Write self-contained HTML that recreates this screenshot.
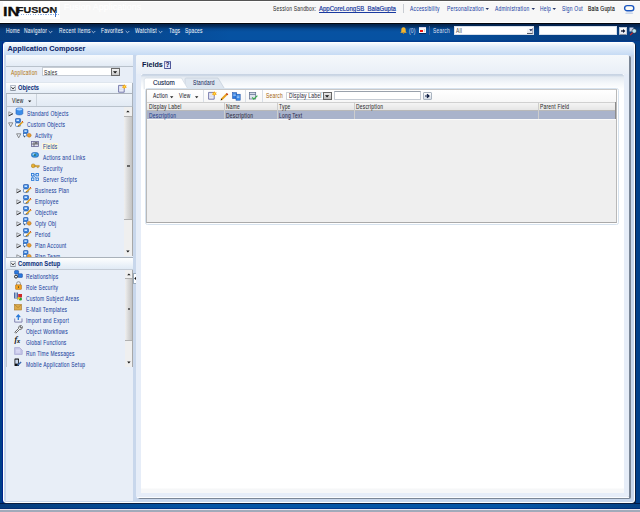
<!DOCTYPE html>
<html><head><meta charset="utf-8">
<style>
*{margin:0;padding:0;box-sizing:border-box}
html,body{width:640px;height:512px;overflow:hidden;background:#003f8a;font-family:"Liberation Sans",sans-serif}
.a{position:absolute}
.t{position:absolute;white-space:nowrap;line-height:1;transform-origin:0 0;-webkit-text-stroke:0.05px currentColor}
</style></head><body>
<div class="a" style="left:0px;top:0px;width:640px;height:1px;background:#555"></div>
<div class="a" style="left:0px;top:1px;width:640px;height:22px;background:#f7f7f7"></div>
<div class="a" style="left:0px;top:1px;width:640px;height:1px;background:#fff"></div>
<div class="a" style="left:0px;top:21.6px;width:640px;height:1px;background:#fff"></div>
<div class="a" style="left:0px;top:22.6px;width:640px;height:1.5px;background:#05080f"></div>
<div class="a" style="left:0px;top:24px;width:640px;height:18px;background:linear-gradient(#03234a,#042c5c 2px,#064a93 5px,#0752a2 8px,#0652a2 16px,#033c8e 17px)"></div>
<div class="a" style="left:0px;top:24px;width:640px;height:17px;background:linear-gradient(90deg,rgba(8,28,70,0.38) 0,rgba(8,28,70,0.25) 110px,rgba(8,28,70,0) 230px,rgba(8,28,70,0) 420px,rgba(8,28,70,0.3) 550px,rgba(8,28,70,0.36) 640px)"></div>
<div class="a" style="left:3px;top:2.3px;width:57px;height:16.7px;background:#fff"></div>
<div class="t" style="left:2.6px;top:5.6px;font-weight:bold;font-size:12.6px;color:#0d0d0d;transform:scaleX(1.3);-webkit-text-stroke:0.3px #0d0d0d">IN</div>
<div class="t" style="left:17.3px;top:6px;font-weight:bold;font-size:8.4px;color:#151515;transform:scaleX(1.27);-webkit-text-stroke:0.2px #151515">FUSION</div>
<div class="a" style="left:18px;top:14px;width:42px;height:1px;background:repeating-linear-gradient(90deg,#8fb0e0 0 1px,transparent 1px 2.5px)"></div>
<div class="a" style="left:55px;top:11px;width:1px;height:6px;background:#3a70c8"></div>
<div class="t" style="left:63.8px;top:2.9px;font-size:9px;color:#fff;-webkit-text-stroke:0.1px #fff">Fusion Applications</div>
<div class="t" style="left:272.8px;top:5.90px;font-size:6.5px;color:#333;transform:scaleX(0.757);letter-spacing:0.3px;">Session Sandbox:</div>
<div class="t" style="left:319px;top:5.90px;font-size:6.5px;color:#1a3aa0;transform:scaleX(0.926);text-decoration:underline;-webkit-text-stroke:0.2px #1a3aa0;">AppCoreLongSB_BalaGupta</div>
<div class="a" style="left:403px;top:4px;width:1px;height:9px;background:#c8ccd2"></div>
<div class="t" style="left:410px;top:5.90px;font-size:6.5px;color:#2545a5;transform:scaleX(0.757);letter-spacing:0.3px;">Accessibility</div>
<div class="t" style="left:447px;top:5.90px;font-size:6.5px;color:#2545a5;transform:scaleX(0.757);letter-spacing:0.3px;">Personalization</div>
<div class="t" style="left:494.5px;top:5.90px;font-size:6.5px;color:#2545a5;transform:scaleX(0.757);letter-spacing:0.3px;">Administration</div>
<div class="t" style="left:539.7px;top:5.90px;font-size:6.5px;color:#2545a5;transform:scaleX(0.757);letter-spacing:0.3px;">Help</div>
<div class="t" style="left:561.6px;top:5.90px;font-size:6.5px;color:#2545a5;transform:scaleX(0.757);letter-spacing:0.3px;">Sign Out</div>
<div class="t" style="left:588px;top:5.90px;font-size:6.5px;color:#000;transform:scaleX(0.757);letter-spacing:0.3px;-webkit-text-stroke:0.1px #000;">Bala Gupta</div>
<svg class="a" style="left:484.5px;top:7px" width="5" height="4"><path d="M0.5 1h3.5l-1.75 2z" fill="#2a3a6a"/></svg>
<svg class="a" style="left:530.5px;top:7px" width="5" height="4"><path d="M0.5 1h3.5l-1.75 2z" fill="#2a3a6a"/></svg>
<svg class="a" style="left:552px;top:7px" width="5" height="4"><path d="M0.5 1h3.5l-1.75 2z" fill="#2a3a6a"/></svg>
<svg class="a" style="left:622px;top:3px" width="14" height="12"><rect x="2.6" y="2.6" width="9.2" height="5.2" rx="2.6" fill="#fdfbf4" stroke="#1a56c0" stroke-width="1.4"/><ellipse cx="7.2" cy="10.2" rx="4" ry="0.9" fill="#c8d6ec"/></svg>
<div class="t" style="left:5.8px;top:28.30px;font-size:6.5px;color:#eef3f9;transform:scaleX(0.757);letter-spacing:0.3px;">Home</div>
<div class="t" style="left:23.7px;top:28.30px;font-size:6.5px;color:#eef3f9;transform:scaleX(0.757);letter-spacing:0.3px;">Navigator</div>
<div class="t" style="left:58.8px;top:28.30px;font-size:6.5px;color:#eef3f9;transform:scaleX(0.757);letter-spacing:0.3px;">Recent Items</div>
<div class="t" style="left:101px;top:28.30px;font-size:6.5px;color:#eef3f9;transform:scaleX(0.757);letter-spacing:0.3px;">Favorites</div>
<div class="t" style="left:135px;top:28.30px;font-size:6.5px;color:#eef3f9;transform:scaleX(0.757);letter-spacing:0.3px;">Watchlist</div>
<div class="t" style="left:168.7px;top:28.30px;font-size:6.5px;color:#eef3f9;transform:scaleX(0.757);letter-spacing:0.3px;">Tags</div>
<div class="t" style="left:185px;top:28.30px;font-size:6.5px;color:#eef3f9;transform:scaleX(0.757);letter-spacing:0.3px;">Spaces</div>
<svg class="a" style="left:48px;top:30px" width="5" height="4"><path d="M0.7 1l1.8 1.8l1.8-1.8" fill="none" stroke="#c8d6ea" stroke-width="0.8"/></svg>
<svg class="a" style="left:90.5px;top:30px" width="5" height="4"><path d="M0.7 1l1.8 1.8l1.8-1.8" fill="none" stroke="#c8d6ea" stroke-width="0.8"/></svg>
<svg class="a" style="left:124.5px;top:30px" width="5" height="4"><path d="M0.7 1l1.8 1.8l1.8-1.8" fill="none" stroke="#c8d6ea" stroke-width="0.8"/></svg>
<svg class="a" style="left:157.5px;top:30px" width="5" height="4"><path d="M0.7 1l1.8 1.8l1.8-1.8" fill="none" stroke="#c8d6ea" stroke-width="0.8"/></svg>
<svg class="a" style="left:400px;top:27px" width="7" height="7"><path d="M3.5 0.3c-1.5 0-2.2 1.2-2.2 2.6v1.5l-1 1.3h6.4l-1-1.3v-1.5c0-1.4-0.7-2.6-2.2-2.6z" fill="#f2b530"/><circle cx="3.5" cy="6.3" r="0.7" fill="#c88010"/></svg>
<div class="t" style="left:409px;top:27.90px;font-size:6.5px;color:#c4d2e8;transform:scaleX(0.757);letter-spacing:0.3px;">(0)</div>
<div class="a" style="left:419px;top:27px;width:7px;height:6px;background:linear-gradient(#d8d0e8 0 1.2px,#f6f6f8 1.2px);box-shadow:0 0.6px 0 #001a40"></div>
<div class="a" style="left:420px;top:29.5px;width:3.2px;height:2px;background:#f01010"></div>
<div class="a" style="left:423.5px;top:28.5px;width:1.8px;height:3.5px;background:#d8d0c0"></div>
<div class="a" style="left:429px;top:26px;width:1px;height:9px;background:#3f609a"></div>
<div class="t" style="left:433px;top:27.90px;font-size:6.5px;color:#d4deec;transform:scaleX(0.757);letter-spacing:0.3px;">Search</div>
<div class="a" style="left:453.5px;top:26px;width:80.5px;height:9px;background:#fff;border:0.5px solid #d8e0ea"></div>
<div class="t" style="left:456px;top:28.40px;font-size:6.5px;color:#555;transform:scaleX(0.757);letter-spacing:0.3px;">All</div>
<div class="a" style="left:527px;top:27.6px;width:6.2px;height:6.2px;background:linear-gradient(#fdfdfd,#e4e8f0);border-bottom:1px solid #555a66;border-right:0.6px solid #aab"></div>
<svg class="a" style="left:528.6px;top:29.3px" width="4" height="3"><path d="M0.2 0.3h3.4L1.9 2.3z" fill="#0a1a50"/></svg>
<div class="a" style="left:538.5px;top:26px;width:78.5px;height:9px;background:#fff;border:0.5px solid #d8e0ea"></div>
<div class="a" style="left:618.75px;top:27px;width:8px;height:8px;background:linear-gradient(#fff,#e6eaf0);border:0.6px solid #c4ccd8;border-bottom-color:#8a94a4"></div>
<svg class="a" style="left:619.5px;top:28px" width="7" height="6"><path d="M1 3h2.6" stroke="#0a1430" stroke-width="1.3"/><path d="M3 0.9l2.4 2.1l-2.4 2.1z" fill="#0a1430"/></svg>
<svg class="a" style="left:628.5px;top:26.5px" width="9" height="9"><rect x="0.5" y="0.5" width="4" height="4" fill="#c8d0e8"/><circle cx="5.2" cy="4" r="2.3" fill="#b8e6f2" stroke="#223" stroke-width="0.6"/><path d="M3.6 5.6l-2.5 2.6" stroke="#d02020" stroke-width="1.2"/></svg>
<div class="a" style="left:0px;top:42px;width:640px;height:466px;background:#003f8a"></div>
<div class="a" style="left:2px;top:42px;width:1px;height:461px;background:#00248a"></div>
<div class="a" style="left:0px;top:503px;width:640px;height:6px;background:linear-gradient(#001a48 0,#001a48 1px,#0454a4 1.5px,#0456a6 4.5px,#003a90 5px)"></div>
<div class="a" style="left:0px;top:504px;width:640px;height:4.5px;background:linear-gradient(90deg,rgba(8,28,70,0.45) 0,rgba(8,28,70,0.3) 60px,rgba(8,28,70,0) 200px,rgba(8,28,70,0) 520px,rgba(8,28,70,0.35) 640px)"></div>
<div class="a" style="left:0px;top:509px;width:640px;height:1px;background:#ece8f0"></div>
<div class="a" style="left:0px;top:510px;width:640px;height:2px;background:#a2aaba"></div>
<div class="a" style="left:3px;top:42px;width:632px;height:461px;background:#c8d7ec;border-radius:3px;border:1px solid #fff;border-bottom:1.5px solid #fff;box-shadow:1px 1px 0 #0a1e40"></div>
<div class="a" style="left:4px;top:43px;width:630px;height:12px;background:linear-gradient(#f8fbfe,#e2edfa 30%,#c6dbf4);border-radius:2px 2px 0 0"></div>
<div class="t" style="left:7.5px;top:44.5px;font-weight:bold;font-size:7.3px;color:#0a2468">Application Composer</div>
<div class="a" style="left:6px;top:55px;width:127px;height:446px;background:#e8eef7"></div>
<div class="a" style="left:6px;top:55px;width:127px;height:11px;background:linear-gradient(#f7fafd,#e3ebf5)"></div>
<div class="a" style="left:6px;top:66px;width:127px;height:1px;background:#b9c2cc"></div>
<div class="t" style="left:11px;top:69.90px;font-size:6.5px;color:#b47814;transform:scaleX(0.757);letter-spacing:0.3px;">Application</div>
<div class="a" style="left:41.5px;top:67.4px;width:78.5px;height:9px;background:#fff;border:1px solid #c6ccd4"></div>
<div class="t" style="left:43.6px;top:69.90px;font-size:6.5px;color:#333;transform:scaleX(0.757);letter-spacing:0.3px;">Sales</div>
<div class="a" style="left:111px;top:68px;width:8.5px;height:8px;background:linear-gradient(#f2f2f2,#c8c8c8);border:1px solid #6a6a6a"></div>
<svg class="a" style="left:113.2px;top:71px" width="5" height="3"><path d="M0 0.3h4.2L2.1 2.6z" fill="#111"/></svg>
<div class="a" style="left:6px;top:82.3px;width:127px;height:11.9px;background:linear-gradient(#fdfefe,#e4edf7);border-top:1px solid #dfe6ee;border-bottom:1px solid #aab2bb"></div>
<div class="a" style="left:9.5px;top:84.8px;width:6px;height:6px;background:linear-gradient(#fbfcfd,#dfe4ea);border:0.7px solid #b4bcc8;border-bottom-color:#8f98a4;border-radius:1px"></div>
<svg class="a" style="left:9.5px;top:84.8px" width="6" height="6"><path d="M1.3 2.2l1.7 1.6l1.7-1.6" fill="none" stroke="#111" stroke-width="0.9"/></svg>
<div class="t" style="left:17.6px;top:84.90px;font-size:6.5px;color:#0c2e7a;font-weight:bold;transform:scaleX(0.88);">Objects</div>
<svg class="a" style="left:118px;top:83.5px" width="9" height="9"><path d="M0.6 1.4h5.6v6.8h-5.6z" fill="#eceef8" stroke="#5a5e9a" stroke-width="0.8"/><path d="M1.4 2.4h2.6M1.4 4h3.4M1.4 5.6h3.4" stroke="#c8cce0" stroke-width="0.5"/><path d="M6.4 0.2l0.8 1.4l1.6-0.2l-0.9 1.3l0.9 1.3l-1.6-0.2l-0.8 1.4l-0.8-1.4l-1.6 0.2l0.9-1.3l-0.9-1.3l1.6 0.2z" fill="#f4a010"/><circle cx="6.4" cy="2.7" r="0.9" fill="#ffe040"/></svg>
<div class="a" style="left:6px;top:93.5px;width:127px;height:13px;background:linear-gradient(#eef3f9,#e2eaf4);border-left:1px solid #b8c2ce;border-bottom:1px solid #b9c2cc"></div>
<div class="t" style="left:12.2px;top:97.90px;font-size:6.5px;color:#222;transform:scaleX(0.757);letter-spacing:0.3px;">View</div>
<svg class="a" style="left:28px;top:100px" width="4" height="3"><path d="M0 0.4h3.4L1.7 2.2z" fill="#222"/></svg>
<div class="a" style="left:36px;top:94px;width:1px;height:12px;background:#cbd3dc"></div>
<div class="a" style="left:132.3px;top:82.5px;width:1px;height:24px;background:#aab2bc"></div>
<div class="a" style="left:6px;top:106.5px;width:1px;height:150.5px;background:#b8c2ce"></div>
<div class="a" style="left:41.5px;top:143.2px;width:16px;height:6.5px;background:#fcf6d8"></div>
<svg class="a" style="left:8px;top:111.2px" width="6" height="6"><path d="M0.8 0.8L4.8 2.8L0.8 4.8z" fill="none" stroke="#777" stroke-width="0.7"/><path d="M0.8 4.8L4.8 2.8" stroke="#222" stroke-width="0.8"/></svg>
<svg class="a" style="left:15px;top:107.2px" width="9" height="9"><path d="M1 2.2C1 0.6 7.8 0.6 7.8 2.2V6.6C7.8 8.3 1 8.3 1 6.6z" fill="#3b8de8" stroke="#1b5ec0" stroke-width="0.6"/><ellipse cx="4.4" cy="2.3" rx="3" ry="1.1" fill="#a8d2ff"/></svg>
<div class="t" style="left:26.7px;top:110.90px;font-size:6.5px;color:#183e9c;transform:scaleX(0.757);letter-spacing:0.3px;">Standard Objects</div>
<svg class="a" style="left:8px;top:122.2px" width="6" height="6"><path d="M0.6 0.8H4.8L2.7 4.8z" fill="none" stroke="#666" stroke-width="0.7"/></svg>
<svg class="a" style="left:15px;top:118.2px" width="9" height="9"><rect x="0.5" y="0.5" width="5" height="4" rx="0.8" fill="#3a86e0" stroke="#1a4aa0" stroke-width="0.6"/><rect x="1.5" y="1.5" width="2.5" height="1.5" fill="#cfe6ff"/><rect x="0.5" y="5" width="5" height="3.3" rx="0.6" fill="#fff" stroke="#1a5ab0" stroke-width="0.6"/><path d="M3.2 8.3L7.8 3.7" stroke="#e0a020" stroke-width="1.6"/><path d="M3 8.5l0.8-1" stroke="#222" stroke-width="0.8"/><path d="M7.2 3.2l1 1" stroke="#d03010" stroke-width="1"/></svg>
<div class="t" style="left:26.7px;top:121.90px;font-size:6.5px;color:#183e9c;transform:scaleX(0.757);letter-spacing:0.3px;">Custom Objects</div>
<svg class="a" style="left:16.4px;top:133.2px" width="6" height="6"><path d="M0.6 0.8H4.8L2.7 4.8z" fill="none" stroke="#666" stroke-width="0.7"/></svg>
<svg class="a" style="left:23px;top:129.2px" width="9" height="9"><rect x="0.5" y="0.5" width="4.5" height="3.8" rx="0.8" fill="#3a86e0" stroke="#1a4aa0" stroke-width="0.6"/><rect x="1.4" y="1.4" width="2.4" height="1.5" fill="#cfe6ff"/><rect x="0.5" y="4.6" width="3" height="2.4" fill="#fff" stroke="#1a5ab0" stroke-width="0.6"/><path d="M1.5 7v1.3" stroke="#222" stroke-width="0.7"/><circle cx="6.2" cy="6.3" r="1.9" fill="#e8a030" stroke="#b06010" stroke-width="0.5"/></svg>
<div class="t" style="left:34.5px;top:132.90px;font-size:6.5px;color:#183e9c;transform:scaleX(0.757);letter-spacing:0.3px;">Activity</div>
<div class="t" style="left:42.6px;top:143.90px;font-size:6.5px;color:#183e9c;transform:scaleX(0.757);letter-spacing:0.3px;">Fields</div>
<div class="t" style="left:42.6px;top:154.90px;font-size:6.5px;color:#183e9c;transform:scaleX(0.757);letter-spacing:0.3px;">Actions and Links</div>
<div class="t" style="left:42.6px;top:165.90px;font-size:6.5px;color:#183e9c;transform:scaleX(0.757);letter-spacing:0.3px;">Security</div>
<div class="t" style="left:42.6px;top:176.90px;font-size:6.5px;color:#183e9c;transform:scaleX(0.757);letter-spacing:0.3px;">Server Scripts</div>
<svg class="a" style="left:16.4px;top:188.2px" width="6" height="6"><path d="M0.8 0.8L4.8 2.8L0.8 4.8z" fill="none" stroke="#777" stroke-width="0.7"/><path d="M0.8 4.8L4.8 2.8" stroke="#222" stroke-width="0.8"/></svg>
<svg class="a" style="left:23px;top:184.2px" width="9" height="9"><rect x="0.5" y="0.5" width="5" height="4" rx="0.8" fill="#3a86e0" stroke="#1a4aa0" stroke-width="0.6"/><rect x="1.5" y="1.5" width="2.5" height="1.5" fill="#cfe6ff"/><rect x="0.5" y="5" width="5" height="3.3" rx="0.6" fill="#fff" stroke="#1a5ab0" stroke-width="0.6"/><path d="M3.2 8.3L7.8 3.7" stroke="#e0a020" stroke-width="1.6"/><path d="M3 8.5l0.8-1" stroke="#222" stroke-width="0.8"/><path d="M7.2 3.2l1 1" stroke="#d03010" stroke-width="1"/></svg>
<div class="t" style="left:34.5px;top:187.90px;font-size:6.5px;color:#183e9c;transform:scaleX(0.757);letter-spacing:0.3px;">Business Plan</div>
<svg class="a" style="left:16.4px;top:199.2px" width="6" height="6"><path d="M0.8 0.8L4.8 2.8L0.8 4.8z" fill="none" stroke="#777" stroke-width="0.7"/><path d="M0.8 4.8L4.8 2.8" stroke="#222" stroke-width="0.8"/></svg>
<svg class="a" style="left:23px;top:195.2px" width="9" height="9"><rect x="0.5" y="0.5" width="5" height="4" rx="0.8" fill="#3a86e0" stroke="#1a4aa0" stroke-width="0.6"/><rect x="1.5" y="1.5" width="2.5" height="1.5" fill="#cfe6ff"/><rect x="0.5" y="5" width="5" height="3.3" rx="0.6" fill="#fff" stroke="#1a5ab0" stroke-width="0.6"/><path d="M3.2 8.3L7.8 3.7" stroke="#e0a020" stroke-width="1.6"/><path d="M3 8.5l0.8-1" stroke="#222" stroke-width="0.8"/><path d="M7.2 3.2l1 1" stroke="#d03010" stroke-width="1"/></svg>
<div class="t" style="left:34.5px;top:198.90px;font-size:6.5px;color:#183e9c;transform:scaleX(0.757);letter-spacing:0.3px;">Employee</div>
<svg class="a" style="left:16.4px;top:210.2px" width="6" height="6"><path d="M0.8 0.8L4.8 2.8L0.8 4.8z" fill="none" stroke="#777" stroke-width="0.7"/><path d="M0.8 4.8L4.8 2.8" stroke="#222" stroke-width="0.8"/></svg>
<svg class="a" style="left:23px;top:206.2px" width="9" height="9"><rect x="0.5" y="0.5" width="5" height="4" rx="0.8" fill="#3a86e0" stroke="#1a4aa0" stroke-width="0.6"/><rect x="1.5" y="1.5" width="2.5" height="1.5" fill="#cfe6ff"/><rect x="0.5" y="5" width="5" height="3.3" rx="0.6" fill="#fff" stroke="#1a5ab0" stroke-width="0.6"/><path d="M3.2 8.3L7.8 3.7" stroke="#e0a020" stroke-width="1.6"/><path d="M3 8.5l0.8-1" stroke="#222" stroke-width="0.8"/><path d="M7.2 3.2l1 1" stroke="#d03010" stroke-width="1"/></svg>
<div class="t" style="left:34.5px;top:209.90px;font-size:6.5px;color:#183e9c;transform:scaleX(0.757);letter-spacing:0.3px;">Objective</div>
<svg class="a" style="left:16.4px;top:221.2px" width="6" height="6"><path d="M0.8 0.8L4.8 2.8L0.8 4.8z" fill="none" stroke="#777" stroke-width="0.7"/><path d="M0.8 4.8L4.8 2.8" stroke="#222" stroke-width="0.8"/></svg>
<svg class="a" style="left:23px;top:217.2px" width="9" height="9"><rect x="0.5" y="0.5" width="4.5" height="3.8" rx="0.8" fill="#3a86e0" stroke="#1a4aa0" stroke-width="0.6"/><rect x="1.4" y="1.4" width="2.4" height="1.5" fill="#cfe6ff"/><rect x="0.5" y="4.6" width="3" height="2.4" fill="#fff" stroke="#1a5ab0" stroke-width="0.6"/><path d="M1.5 7v1.3" stroke="#222" stroke-width="0.7"/><circle cx="6.2" cy="6.3" r="1.9" fill="#e8a030" stroke="#b06010" stroke-width="0.5"/></svg>
<div class="t" style="left:34.5px;top:220.90px;font-size:6.5px;color:#183e9c;transform:scaleX(0.757);letter-spacing:0.3px;">Opty Obj</div>
<svg class="a" style="left:16.4px;top:232.2px" width="6" height="6"><path d="M0.8 0.8L4.8 2.8L0.8 4.8z" fill="none" stroke="#777" stroke-width="0.7"/><path d="M0.8 4.8L4.8 2.8" stroke="#222" stroke-width="0.8"/></svg>
<svg class="a" style="left:23px;top:228.2px" width="9" height="9"><rect x="0.5" y="0.5" width="5" height="4" rx="0.8" fill="#3a86e0" stroke="#1a4aa0" stroke-width="0.6"/><rect x="1.5" y="1.5" width="2.5" height="1.5" fill="#cfe6ff"/><rect x="0.5" y="5" width="5" height="3.3" rx="0.6" fill="#fff" stroke="#1a5ab0" stroke-width="0.6"/><path d="M3.2 8.3L7.8 3.7" stroke="#e0a020" stroke-width="1.6"/><path d="M3 8.5l0.8-1" stroke="#222" stroke-width="0.8"/><path d="M7.2 3.2l1 1" stroke="#d03010" stroke-width="1"/></svg>
<div class="t" style="left:34.5px;top:231.90px;font-size:6.5px;color:#183e9c;transform:scaleX(0.757);letter-spacing:0.3px;">Period</div>
<svg class="a" style="left:16.4px;top:243.2px" width="6" height="6"><path d="M0.8 0.8L4.8 2.8L0.8 4.8z" fill="none" stroke="#777" stroke-width="0.7"/><path d="M0.8 4.8L4.8 2.8" stroke="#222" stroke-width="0.8"/></svg>
<svg class="a" style="left:23px;top:239.2px" width="9" height="9"><rect x="0.5" y="0.5" width="4.5" height="3.8" rx="0.8" fill="#3a86e0" stroke="#1a4aa0" stroke-width="0.6"/><rect x="1.4" y="1.4" width="2.4" height="1.5" fill="#cfe6ff"/><rect x="0.5" y="4.6" width="3" height="2.4" fill="#fff" stroke="#1a5ab0" stroke-width="0.6"/><path d="M1.5 7v1.3" stroke="#222" stroke-width="0.7"/><circle cx="6.2" cy="6.3" r="1.9" fill="#e8a030" stroke="#b06010" stroke-width="0.5"/></svg>
<div class="t" style="left:34.5px;top:242.90px;font-size:6.5px;color:#183e9c;transform:scaleX(0.757);letter-spacing:0.3px;">Plan Account</div>
<svg class="a" style="left:16.4px;top:254.2px" width="6" height="6"><path d="M0.8 0.8L4.8 2.8L0.8 4.8z" fill="none" stroke="#777" stroke-width="0.7"/><path d="M0.8 4.8L4.8 2.8" stroke="#222" stroke-width="0.8"/></svg>
<svg class="a" style="left:23px;top:250.2px" width="9" height="9"><rect x="0.5" y="0.5" width="4.5" height="3.8" rx="0.8" fill="#3a86e0" stroke="#1a4aa0" stroke-width="0.6"/><rect x="1.4" y="1.4" width="2.4" height="1.5" fill="#cfe6ff"/><rect x="0.5" y="4.6" width="3" height="2.4" fill="#fff" stroke="#1a5ab0" stroke-width="0.6"/><path d="M1.5 7v1.3" stroke="#222" stroke-width="0.7"/><circle cx="6.2" cy="6.3" r="1.9" fill="#e8a030" stroke="#b06010" stroke-width="0.5"/></svg>
<div class="t" style="left:34.5px;top:253.90px;font-size:6.5px;color:#183e9c;transform:scaleX(0.757);letter-spacing:0.3px;">Plan Team</div>
<svg class="a" style="left:31px;top:141px" width="8" height="6"><rect x="0.5" y="0.5" width="7" height="5" fill="#dcdcf0" stroke="#6a6a9a" stroke-width="0.8"/><path d="M0.5 3h7M3 0.5v5" stroke="#555" stroke-width="0.8"/><rect x="4" y="1.3" width="2.6" height="1.2" fill="#444"/></svg>
<svg class="a" style="left:31px;top:152px" width="8" height="6"><rect x="0.4" y="0.6" width="7.2" height="4.6" rx="2.2" fill="#3a9ae0" stroke="#1a5ab0" stroke-width="0.6"/><rect x="1.6" y="1.6" width="2.2" height="1" fill="#d8f0ff"/><rect x="3.3" y="2.2" width="1.2" height="1.6" fill="#2a5a20"/></svg>
<svg class="a" style="left:31px;top:163px" width="9" height="6"><circle cx="2.2" cy="2.8" r="1.9" fill="#e8b030" stroke="#a07010" stroke-width="0.5"/><path d="M3.8 2.4h4.5v1.3h-1v1h-1v-1h-2.5z" fill="#e8b030" stroke="#a07010" stroke-width="0.4"/></svg>
<svg class="a" style="left:31px;top:173px" width="8" height="8"><rect x="0.5" y="0.5" width="2.4" height="2.4" fill="none" stroke="#2a7ad8" stroke-width="0.9"/><rect x="5" y="0.5" width="2.4" height="2.4" fill="none" stroke="#2a7ad8" stroke-width="0.9"/><rect x="0.5" y="5" width="2.4" height="2.4" fill="none" stroke="#2a7ad8" stroke-width="0.9"/><rect x="5" y="5" width="2.4" height="2.4" fill="none" stroke="#2a7ad8" stroke-width="0.9"/><path d="M2.9 1.7h2.1M1.7 2.9v2.1M2.9 2.9l2.1 2.1" stroke="#2a7ad8" stroke-width="0.7"/></svg>
<div class="a" style="left:6px;top:256.5px;width:127px;height:1px;background:#a9b1ba"></div>
<div class="a" style="left:6px;top:257.5px;width:127px;height:12px;background:linear-gradient(#fdfefe,#e0eaf5);border-bottom:1px solid #c4ccd6"></div>
<div class="a" style="left:9.5px;top:261px;width:6px;height:6px;background:linear-gradient(#fbfcfd,#dfe4ea);border:0.7px solid #b4bcc8;border-bottom-color:#8f98a4;border-radius:1px"></div>
<svg class="a" style="left:9.5px;top:261px" width="6" height="6"><path d="M1.3 2.2l1.7 1.6l1.7-1.6" fill="none" stroke="#111" stroke-width="0.9"/></svg>
<div class="t" style="left:17.7px;top:260.90px;font-size:6.5px;color:#0c2e7a;font-weight:bold;transform:scaleX(0.88);">Common Setup</div>
<div class="a" style="left:6px;top:270px;width:1px;height:97px;background:#c0c8d4"></div>
<div class="t" style="left:25.8px;top:273.90px;font-size:6.5px;color:#183e9c;transform:scaleX(0.757);letter-spacing:0.3px;">Relationships</div>
<div class="t" style="left:25.8px;top:284.90px;font-size:6.5px;color:#183e9c;transform:scaleX(0.757);letter-spacing:0.3px;">Role Security</div>
<div class="t" style="left:25.8px;top:295.90px;font-size:6.5px;color:#183e9c;transform:scaleX(0.757);letter-spacing:0.3px;">Custom Subject Areas</div>
<div class="t" style="left:25.8px;top:306.90px;font-size:6.5px;color:#183e9c;transform:scaleX(0.757);letter-spacing:0.3px;">E-Mail Templates</div>
<div class="t" style="left:25.8px;top:317.90px;font-size:6.5px;color:#183e9c;transform:scaleX(0.757);letter-spacing:0.3px;">Import and Export</div>
<div class="t" style="left:25.8px;top:328.90px;font-size:6.5px;color:#183e9c;transform:scaleX(0.757);letter-spacing:0.3px;">Object Workflows</div>
<div class="t" style="left:25.8px;top:339.90px;font-size:6.5px;color:#183e9c;transform:scaleX(0.757);letter-spacing:0.3px;">Global Functions</div>
<div class="t" style="left:25.8px;top:350.90px;font-size:6.5px;color:#183e9c;transform:scaleX(0.757);letter-spacing:0.3px;">Run Time Messages</div>
<div class="t" style="left:25.8px;top:361.90px;font-size:6.5px;color:#183e9c;transform:scaleX(0.757);letter-spacing:0.3px;">Mobile Application Setup</div>
<svg class="a" style="left:13.8px;top:270px" width="9" height="9"><rect x="0.6" y="0.6" width="4" height="3.4" rx="0.6" fill="#2a7ae0" stroke="#1a4aa0" stroke-width="0.6"/><rect x="4" y="3.8" width="4.4" height="3.6" rx="0.6" fill="#2a7ae0" stroke="#1a4aa0" stroke-width="0.6"/><circle cx="2" cy="6.6" r="1.5" fill="none" stroke="#111" stroke-width="0.9"/></svg>
<svg class="a" style="left:14.5px;top:280.5px" width="7" height="9"><path d="M1.6 4V2.6a1.9 1.9 0 0 1 3.8 0V4" fill="none" stroke="#888" stroke-width="0.9"/><rect x="0.5" y="3.8" width="6" height="4.6" rx="0.6" fill="#f0a020" stroke="#b06a10" stroke-width="0.5"/><rect x="3" y="5.3" width="1" height="1.6" fill="#553"/></svg>
<svg class="a" style="left:14px;top:292px" width="9" height="9"><path d="M0.5 0.5v6M2 0.5v6.5M3.5 0.5v7" stroke="#3a5a9a" stroke-width="0.9"/><rect x="4.2" y="2" width="3.8" height="3.5" fill="#d02a2a"/><circle cx="6.4" cy="7" r="1.6" fill="#2aa02a"/><circle cx="4.6" cy="6.3" r="1.2" fill="#e8c020"/></svg>
<svg class="a" style="left:14px;top:303.5px" width="8" height="7"><rect x="0.5" y="0.5" width="7" height="5.5" fill="#dcaa4a" stroke="#a8782a" stroke-width="0.6"/><path d="M0.8 0.8l3.2 2.8l3.2-2.8" fill="none" stroke="#a8782a" stroke-width="0.6"/></svg>
<svg class="a" style="left:14px;top:313.5px" width="9" height="9"><path d="M0.7 4.5v3.6h7.3V4.5" fill="#e8eef8" stroke="#6a6aa0" stroke-width="0.8"/><path d="M4.3 6V1.4M2.4 3.2l1.9-2.2l1.9 2.2" fill="none" stroke="#2a7ad8" stroke-width="1.3"/></svg>
<svg class="a" style="left:13.5px;top:325px" width="9" height="9"><path d="M0.8 7.2L1.8 8.2L5.6 4.4A2.3 2.3 0 0 0 8.4 1.6L7.2 2.8L6.2 2.8L6.2 1.8L7.4 0.6A2.3 2.3 0 0 0 4.6 3.4z" fill="#fafafa" stroke="#333" stroke-width="0.7"/></svg>
<div class="t" style="left:14.6px;top:334.6px;font-family:'Liberation Serif',serif;font-style:italic;font-size:9px;color:#000;-webkit-text-stroke:0.2px #000">f<span style="font-size:6.5px;position:relative;top:1px">x</span></div>
<svg class="a" style="left:14px;top:346.5px" width="9" height="8"><path d="M0.6 0.6h5l2.6 2.6v4.2h-7.6z" fill="#c8c8e8" stroke="#9a9acc" stroke-width="0.6"/><path d="M2 3.2h4M2 5h4" stroke="#e8e8ff" stroke-width="0.8"/></svg>
<svg class="a" style="left:14px;top:357.5px" width="8" height="9"><rect x="0.5" y="0.5" width="4.5" height="7.6" rx="0.6" fill="#111"/><rect x="1.3" y="1.6" width="2.9" height="4" fill="#c8d8f0"/><path d="M3.5 7.5l3.6-3.6" stroke="#3a6ab0" stroke-width="1.4"/></svg>
<div class="a" style="left:124px;top:106.5px;width:8.5px;height:149.5px;background:#efefef;border-right:1px solid #a8a8a8"></div>
<div class="a" style="left:124.3px;top:115.5px;width:7.5px;height:104.5px;background:linear-gradient(90deg,#f0f0f0,#dadada 45%,#c4c4c4);border-top:1px solid #b0b0b0;border-bottom:1px solid #b0b0b0"></div>
<svg class="a" style="left:126.2px;top:110.0px" width="4" height="3"><path d="M0.2 2.3L1.9 0.5L3.6 2.3z" fill="#111"/></svg>
<svg class="a" style="left:126.2px;top:250px" width="4" height="3"><path d="M0.2 0.6L1.9 2.4L3.6 0.6z" fill="#111"/></svg>
<div class="a" style="left:127px;top:164.5px;width:2.5px;height:3px;background:repeating-linear-gradient(#666 0 0.6px,transparent 0.6px 1.3px)"></div>
<div class="a" style="left:124.5px;top:269.5px;width:8.5px;height:97.0px;background:#efefef;border-right:1px solid #a8a8a8"></div>
<div class="a" style="left:124.8px;top:278.4px;width:7.5px;height:62.60000000000002px;background:linear-gradient(90deg,#f0f0f0,#dadada 45%,#c4c4c4);border-top:1px solid #b0b0b0;border-bottom:1px solid #b0b0b0"></div>
<svg class="a" style="left:126.7px;top:273.0px" width="4" height="3"><path d="M0.2 2.3L1.9 0.5L3.6 2.3z" fill="#111"/></svg>
<svg class="a" style="left:126.7px;top:360.5px" width="4" height="3"><path d="M0.2 0.6L1.9 2.4L3.6 0.6z" fill="#111"/></svg>
<div class="a" style="left:127.5px;top:307.5px;width:2.5px;height:3px;background:repeating-linear-gradient(#666 0 0.6px,transparent 0.6px 1.3px)"></div>
<div class="a" style="left:133.3px;top:273px;width:3.5px;height:11px;background:#fff;border:0.5px solid #9ab"></div>
<svg class="a" style="left:133.5px;top:276px" width="3" height="5"><path d="M2.6 0.2v4.4L0.2 2.4z" fill="#111"/></svg>
<div class="a" style="left:136px;top:55px;width:493px;height:443px;background:#e6edf8;border-radius:2px;box-shadow:2px 1px 0 #7a8696"></div>
<div class="a" style="left:136px;top:55px;width:493px;height:19px;background:linear-gradient(#f5f8fb,#e9eff7);border-radius:2px 2px 0 0"></div>
<div class="a" style="left:141px;top:74px;width:483px;height:418.5px;background:linear-gradient(#fff 0,#fff calc(100% - 5px),#f6f7f8 calc(100% - 4px))"></div>
<div class="a" style="left:137px;top:497px;width:492px;height:1px;background:#fbfcfe"></div>
<div class="t" style="left:141.9px;top:60.9px;font-weight:bold;font-size:7.6px;color:#0a1a48;transform:scaleX(0.95)">Fields</div>
<div class="a" style="left:164.4px;top:61.4px;width:6.8px;height:7.4px;background:#e4e6fa;border:0.6px solid #7078b0;border-bottom-color:#50589a;border-right-color:#50589a;border-radius:0.8px"></div>
<div class="t" style="left:165.6px;top:61.8px;font-weight:bold;font-size:6.6px;color:#0a1050">?</div>
<div class="a" style="left:141px;top:74px;width:482.5px;height:14.5px;background:linear-gradient(#c6d2e2,#cdd8e6 1.5px,#e4eaf1 3px,#f4f7fa 60%,#fff);border-radius:2.5px 2.5px 0 0"></div>
<svg class="a" style="left:143px;top:76.5px" width="90" height="13"><path d="M42 12.5V2.2C42 1.3 42.7 1 43.6 1H75l7 11.5z" fill="#dfe7f0" stroke="#c6d0dc" stroke-width="0.8"/><path d="M1.2 12.5V3.2C1.2 1.8 2.2 1 3.6 1H38.5l6.8 11.5z" fill="#fff" stroke="#d2dae4" stroke-width="0.8"/><path d="M1.2 12.5H46" stroke="#fff" stroke-width="1"/></svg>
<div class="t" style="left:152.8px;top:80.40px;font-size:6.5px;color:#0e1a48;transform:scaleX(0.97);-webkit-text-stroke:0.1px #0e1a48;">Custom</div>
<div class="t" style="left:192.7px;top:80.40px;font-size:6.5px;color:#1a2a58;transform:scaleX(0.757);letter-spacing:0.3px;">Standard</div>
<div class="a" style="left:144.8px;top:87.8px;width:474.5px;height:137px;border:1px solid #d6e2ee;border-radius:2.5px"></div>
<div class="a" style="left:146px;top:89px;width:471px;height:134px;background:#efefef;border:1px solid #b9b9b9;border-top-color:#c8c8c8;border-bottom:1.5px solid #a9a9a9"></div>
<div class="a" style="left:147px;top:90px;width:469px;height:11.5px;background:linear-gradient(#fff,#f7f7f7)"></div>
<div class="t" style="left:152.5px;top:93.40px;font-size:6.5px;color:#1a1a2a;transform:scaleX(0.757);letter-spacing:0.3px;">Action</div>
<svg class="a" style="left:170px;top:95.5px" width="4" height="3"><path d="M0 0.3h3.4L1.7 2.2z" fill="#222"/></svg>
<div class="t" style="left:179.4px;top:93.40px;font-size:6.5px;color:#1a1a2a;transform:scaleX(0.757);letter-spacing:0.3px;">View</div>
<svg class="a" style="left:194.5px;top:95.5px" width="4" height="3"><path d="M0 0.3h3.4L1.7 2.2z" fill="#222"/></svg>
<div class="a" style="left:202.5px;top:90px;width:1px;height:11.5px;background:#d8dee6"></div>
<svg class="a" style="left:207.8px;top:91.2px" width="9" height="9"><path d="M0.6 1.4h5.6v6.8h-5.6z" fill="#eceef8" stroke="#5a5e9a" stroke-width="0.8"/><path d="M1.4 2.4h2.6M1.4 4h3.4M1.4 5.6h3.4" stroke="#c8cce0" stroke-width="0.5"/><path d="M6.4 0.2l0.8 1.4l1.6-0.2l-0.9 1.3l0.9 1.3l-1.6-0.2l-0.8 1.4l-0.8-1.4l-1.6 0.2l0.9-1.3l-0.9-1.3l1.6 0.2z" fill="#f4a010"/><circle cx="6.4" cy="2.7" r="0.9" fill="#ffe040"/></svg>
<svg class="a" style="left:219.5px;top:91.5px" width="9" height="9"><path d="M1.2 7.8L7 2" stroke="#e8a020" stroke-width="2"/><path d="M1 8.2l0.9-1.4" stroke="#222" stroke-width="1"/><path d="M6.4 1.4l1.4 1.4" stroke="#c03010" stroke-width="1.4"/></svg>
<svg class="a" style="left:231.5px;top:91.5px" width="9" height="9"><rect x="0.5" y="0.6" width="4.2" height="6" fill="#2a7ae0" stroke="#1a4aa0" stroke-width="0.5"/><rect x="4" y="2.2" width="4.2" height="6" fill="#3a8ae8" stroke="#1a4aa0" stroke-width="0.5"/><path d="M1.3 2.2h2.6M1.3 3.6h2.6M4.8 4.2h2.6M4.8 5.6h2.6" stroke="#d8ecff" stroke-width="0.6"/></svg>
<div class="a" style="left:244.5px;top:90px;width:1px;height:11.5px;background:#d8dee6"></div>
<svg class="a" style="left:248.5px;top:91.5px" width="9" height="9"><rect x="0.5" y="0.5" width="6.2" height="6.5" fill="#dde2ee" stroke="#5a6a8a" stroke-width="0.7"/><path d="M0.5 2.4h6.2" stroke="#5a6a8a" stroke-width="0.8"/><path d="M3.2 5.4l1.6 1.8l3.6-3.6" fill="none" stroke="#3aaa4a" stroke-width="1.2"/></svg>
<div class="a" style="left:262px;top:90px;width:1px;height:11.5px;background:#d8dee6"></div>
<div class="t" style="left:265.6px;top:93.40px;font-size:6.5px;color:#a86810;transform:scaleX(0.757);letter-spacing:0.3px;">Search</div>
<div class="a" style="left:286.2px;top:91.5px;width:45.8px;height:8.2px;background:#fff;border:1px solid #ccd2d8"></div>
<div class="t" style="left:289px;top:93.40px;font-size:6.5px;color:#2a2a3a;transform:scaleX(0.757);letter-spacing:0.3px;">Display Label</div>
<div class="a" style="left:323px;top:92px;width:8.5px;height:7.5px;background:linear-gradient(#eaeaea,#bdbdbd);border:1px solid #666"></div>
<svg class="a" style="left:325.2px;top:95px" width="5" height="3"><path d="M0 0.3h4.2L2.1 2.6z" fill="#111"/></svg>
<div class="a" style="left:334.2px;top:91px;width:87.2px;height:9.4px;background:#fff;border:1px solid #c6ccd4;border-top-color:#9aa2ac"></div>
<div class="a" style="left:422.5px;top:91.5px;width:9px;height:8px;background:linear-gradient(#fdfdfd,#d6dde6);border:0.8px solid #aab4c0;border-radius:1px"></div>
<svg class="a" style="left:423.5px;top:92.5px" width="7" height="6"><path d="M1 3h3.2M3 1.2l2 1.8l-2 1.8" fill="none" stroke="#0a1a40" stroke-width="1.2"/></svg>
<div class="a" style="left:147px;top:101.5px;width:469px;height:9.5px;background:linear-gradient(#f4f4f4,#e6e6e6);border-top:1px solid #d0d0d0;border-bottom:1px solid #b8b8b8"></div>
<div class="t" style="left:148.6px;top:104.40px;font-size:6.5px;color:#2a2a2a;transform:scaleX(0.757);letter-spacing:0.3px;">Display Label</div>
<div class="t" style="left:226.2px;top:104.40px;font-size:6.5px;color:#2a2a2a;transform:scaleX(0.757);letter-spacing:0.3px;">Name</div>
<div class="t" style="left:279px;top:104.40px;font-size:6.5px;color:#2a2a2a;transform:scaleX(0.757);letter-spacing:0.3px;">Type</div>
<div class="t" style="left:356px;top:104.40px;font-size:6.5px;color:#2a2a2a;transform:scaleX(0.757);letter-spacing:0.3px;">Description</div>
<div class="t" style="left:540px;top:104.40px;font-size:6.5px;color:#2a2a2a;transform:scaleX(0.757);letter-spacing:0.3px;">Parent Field</div>
<div class="a" style="left:147px;top:111px;width:469px;height:8px;background:#a9b3cb"></div>
<div class="a" style="left:147px;top:119px;width:469px;height:1px;background:#fafafa"></div>
<div class="t" style="left:148.6px;top:112.90px;font-size:6.5px;color:#1c3a8a;transform:scaleX(0.757);letter-spacing:0.3px;">Description</div>
<div class="t" style="left:226.2px;top:112.90px;font-size:6.5px;color:#2a2a3a;transform:scaleX(0.757);letter-spacing:0.3px;">Description</div>
<div class="t" style="left:279px;top:112.90px;font-size:6.5px;color:#2a2a4a;transform:scaleX(0.757);letter-spacing:0.3px;">Long Text</div>
<div class="a" style="left:615.2px;top:101.5px;width:1.2px;height:17.5px;background:#8c8c8c"></div>
<div class="a" style="left:224px;top:101.5px;width:1px;height:17.5px;background:#cdcdcd"></div>
<div class="a" style="left:277px;top:101.5px;width:1px;height:17.5px;background:#cdcdcd"></div>
<div class="a" style="left:353.7px;top:101.5px;width:1px;height:17.5px;background:#cdcdcd"></div>
<div class="a" style="left:538.3px;top:101.5px;width:1px;height:17.5px;background:#cdcdcd"></div>
</body></html>
